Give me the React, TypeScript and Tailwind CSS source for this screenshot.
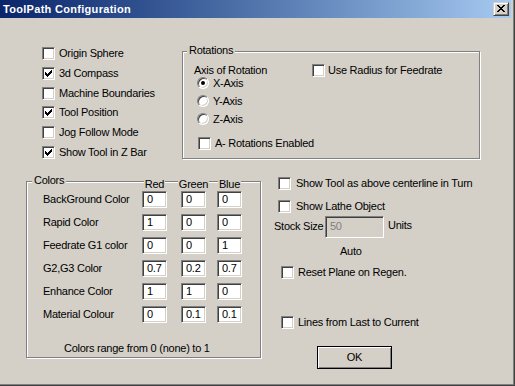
const sunken =
  "border border-t-[#808080] border-l-[#808080] border-b-white border-r-white shadow-[inset_1px_1px_0_#404040,inset_-1px_-1px_0_#d4d0c8]";

function Check({ checked = false }: { checked?: boolean }) {
  return (
    <span className={`relative block w-[13px] h-[13px] shrink-0 bg-white ${sunken}`}>
      {checked && (
        <svg
          width="13"
          height="13"
          viewBox="0 0 13 13"
          shapeRendering="crispEdges"
          className="absolute left-[-1px] top-[-1px]"
        >
          <rect x="3" y="5" width="1" height="3" fill="#000" />
          <rect x="4" y="6" width="1" height="3" fill="#000" />
          <rect x="5" y="7" width="1" height="3" fill="#000" />
          <rect x="6" y="6" width="1" height="3" fill="#000" />
          <rect x="7" y="5" width="1" height="3" fill="#000" />
          <rect x="8" y="4" width="1" height="3" fill="#000" />
          <rect x="9" y="3" width="1" height="3" fill="#000" />
        </svg>
      )}
    </span>
  );
}

function Radio({ checked = false }: { checked?: boolean }) {
  return (
    <span className={`relative block w-3 h-3 shrink-0 rounded-full bg-white ${sunken}`}>
      {checked && <span className="absolute left-[3px] top-[3px] w-1 h-1 rounded-full bg-black" />}
    </span>
  );
}

function Group({
  label,
  className,
  legendLeft,
  children,
}: {
  label: string;
  className: string;
  legendLeft: string;
  children: React.ReactNode;
}) {
  return (
    <div
      className={`relative shrink-0 border border-[#808080] shadow-[1px_1px_0_#fff,inset_1px_1px_0_#fff] ${className}`}
    >
      <span className={`absolute top-[-8px] px-[2px] bg-[#d4d0c8] ${legendLeft}`}>{label}</span>
      {children}
    </div>
  );
}

function Field({ value }: { value: string }) {
  return (
    <div className={`w-[25px] h-[17px] bg-white pl-[4px] flex items-center ${sunken}`}>{value}</div>
  );
}

const displayOpts = [
  { label: "Origin Sphere", checked: false },
  { label: "3d Compass", checked: true },
  { label: "Machine Boundaries", checked: false },
  { label: "Tool Position", checked: true },
  { label: "Jog Follow Mode", checked: false },
  { label: "Show Tool in Z Bar", checked: true },
];

const colors = [
  { label: "BackGround Color", rgb: ["0", "0", "0"] },
  { label: "Rapid Color", rgb: ["1", "0", "0"] },
  { label: "Feedrate G1 color", rgb: ["0", "0", "1"] },
  { label: "G2,G3 Color", rgb: ["0.7", "0.2", "0.7"] },
  { label: "Enhance Color", rgb: ["1", "1", "0"] },
  { label: "Material Colour", rgb: ["0", "0.1", "0.1"] },
];

export default function App() {
  return (
    <div className="w-[515px] h-[386px] border-r border-b border-[#404040] font-['Liberation_Sans',Arial,sans-serif] text-[11px] leading-[13px] tracking-[-0.25px] text-black">
      <div className="h-full border-r border-b border-[#808080] bg-[#d4d0c8] pr-[2px] pb-[2px] flex flex-col">
        {/* title bar */}
        <div className="h-[18px] shrink-0 bg-linear-to-r from-[#0a246a] to-[#a6caf0] flex items-center justify-between pl-[3px] pr-[2px]">
          <span className="text-white font-bold text-[11px] tracking-[0.3px]">ToolPath Configuration</span>
          <button className="w-4 h-[14px] bg-[#d4d0c8] border border-t-[#d4d0c8] border-l-[#d4d0c8] border-b-[#404040] border-r-[#404040] shadow-[inset_1px_1px_0_#fff,inset_-1px_-1px_0_#808080] flex items-start">
            <svg width="14" height="12" viewBox="0 0 14 12" shapeRendering="crispEdges">
              <g fill="#000">
                <rect x="3" y="2" width="2" height="1" />
                <rect x="9" y="2" width="2" height="1" />
                <rect x="4" y="3" width="2" height="1" />
                <rect x="8" y="3" width="2" height="1" />
                <rect x="5" y="4" width="4" height="1" />
                <rect x="6" y="5" width="2" height="1" />
                <rect x="5" y="6" width="4" height="1" />
                <rect x="4" y="7" width="2" height="1" />
                <rect x="8" y="7" width="2" height="1" />
                <rect x="3" y="8" width="2" height="1" />
                <rect x="9" y="8" width="2" height="1" />
              </g>
            </svg>
          </button>
        </div>

        {/* top row */}
        <div className="flex items-start mt-[29px]">
          <div className="w-[182px] shrink-0 pl-[42px] flex flex-col">
            {displayOpts.map((o) => (
              <div key={o.label} className="h-[19.8px] flex items-start">
                <div className="flex items-center h-[13px]">
                  <Check checked={o.checked} />
                  <span className="ml-[4px] whitespace-nowrap">{o.label}</span>
                </div>
              </div>
            ))}
          </div>

          <Group label="Rotations" legendLeft="left-[4px]" className="mt-[4px] w-[298px] h-[108px]">
            <div className="mt-[12px] h-[13px] flex items-center">
              <span className="ml-[11px] w-[118px]">Axis of Rotation</span>
              <Check />
              <span className="ml-[3px] whitespace-nowrap">Use Radius for Feedrate</span>
            </div>
            <div className="mt-[-3px] ml-[14px] flex flex-col">
              {["X-Axis", "Y-Axis", "Z-Axis"].map((a, i) => (
                <div key={a} className="h-[18px] flex items-center">
                  <Radio checked={i === 0} />
                  <span className="ml-[4px]">{a}</span>
                </div>
              ))}
            </div>
            <div className="mt-[9px] ml-[15px] h-[13px] flex items-center">
              <Check />
              <span className="ml-[4px] whitespace-nowrap">A- Rotations Enabled</span>
            </div>
          </Group>
        </div>

        {/* bottom row */}
        <div className="flex items-start mt-[11px]">
          <Group label="Colors" legendLeft="left-[5px]" className="ml-[26px] mt-[4px] w-[235px] h-[177px]">
            <div className="mt-[-4px] h-[13px] flex">
              <div className="w-[115px]" />
              <div className="w-[25px] flex justify-center">
                <span className="bg-[#d4d0c8] px-[1px]">Red</span>
              </div>
              <div className="ml-[14px] w-[25px] flex justify-center">
                <span className="bg-[#d4d0c8] px-[1px]">Green</span>
              </div>
              <div className="ml-[11px] w-[25px] flex justify-center">
                <span className="bg-[#d4d0c8] px-[1px]">Blue</span>
              </div>
            </div>
            <div className="flex flex-col gap-[6px]">
              {colors.map((c) => (
                <div key={c.label} className="h-[17px] flex items-center">
                  <span className="pl-[16px] w-[115px] whitespace-nowrap">{c.label}</span>
                  <Field value={c.rgb[0]} />
                  <div className="ml-[14px]">
                    <Field value={c.rgb[1]} />
                  </div>
                  <div className="ml-[11px]">
                    <Field value={c.rgb[2]} />
                  </div>
                </div>
              ))}
            </div>
            <div className="mt-[19px] ml-[37px] whitespace-nowrap">Colors range from 0 (none) to 1</div>
          </Group>

          <div className="ml-[13px] flex flex-col items-start">
            <div className="ml-[4px] h-[13px] flex items-center">
              <Check />
              <span className="ml-[5px] whitespace-nowrap">Show Tool as above centerline in Turn</span>
            </div>
            <div className="mt-[10px] ml-[4px] h-[13px] flex items-center">
              <Check />
              <span className="ml-[5px] whitespace-nowrap">Show Lathe Object</span>
            </div>
            <div className="mt-[3px] h-[22px] flex items-center">
              <span className="w-[51px] whitespace-nowrap">Stock Size</span>
              <div className={`w-[59px] h-[22px] bg-[#d4d0c8] text-[#808080] pl-[4px] flex items-center ${sunken}`}>
                50
              </div>
              <span className="ml-[4px] mb-[2px]">Units</span>
            </div>
            <span className="mt-[7px] ml-[66px]">Auto</span>
            <div className="mt-[8px] ml-[7px] h-[13px] flex items-center">
              <Check />
              <span className="ml-[4px] whitespace-nowrap">Reset Plane on Regen.</span>
            </div>
            <div className="mt-[37px] ml-[7px] h-[13px] flex items-center">
              <Check />
              <span className="ml-[4px] whitespace-nowrap">Lines from Last to Current</span>
            </div>
            <button className="mt-[17px] ml-[43px] w-[75px] h-[23px] bg-[#d4d0c8] border border-black shadow-[inset_1px_1px_0_#fff,inset_-1px_-1px_0_#808080] flex items-center justify-center">
              OK
            </button>
          </div>
        </div>
      </div>
    </div>
  );
}
